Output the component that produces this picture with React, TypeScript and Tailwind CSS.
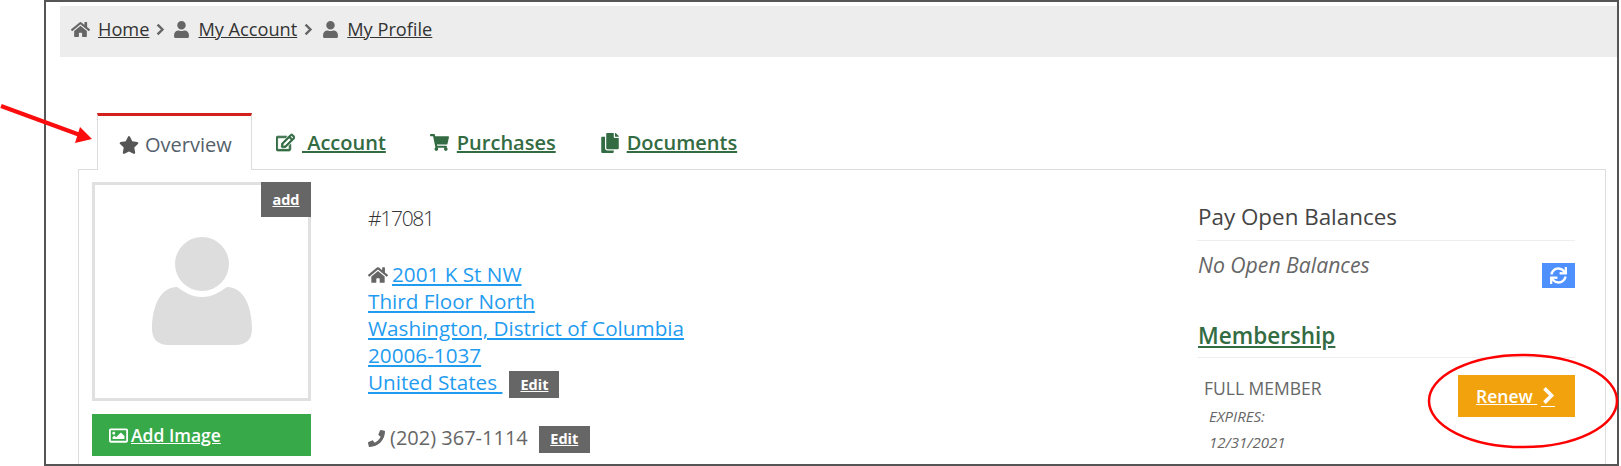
import { FaHome, FaUser, FaStar, FaRegEdit, FaShoppingCart, FaCopy, FaPhone, FaRegImage, FaSync } from 'react-icons/fa';

const font = "font-['Open_Sans','Liberation_Sans',sans-serif]";

function Chevron({ className }: { className: string }) {
  return (
    <svg viewBox="0 0 10 16" className={className} aria-hidden="true">
      <path d="M2 2 L8 8 L2 14" fill="none" stroke="currentColor" strokeWidth="3" />
    </svg>
  );
}

function Crumb({ icon, label, iconWidth }: { icon: React.ReactNode; label: string; iconWidth: string }) {
  return (
    <span className="flex items-center">
      <span className={`text-[#666] text-[19px] flex justify-start ${iconWidth}`}>{icon}</span>
      <a className="underline text-[#333] text-[18.2px]">{label}</a>
    </span>
  );
}

function Tab({ icon, label, className }: { icon: React.ReactNode; label: string; className: string }) {
  return (
    <a className={`flex items-center pt-[2px] underline font-semibold text-[20px] text-[#336b43] ${className}`}>
      {icon}
      <span>{label}</span>
    </a>
  );
}

function EditButton({ className }: { className: string }) {
  return (
    <span className={`inline-flex items-center justify-center bg-[#666] text-white font-bold underline text-[14.5px] h-[27px] ${className}`}>
      Edit
    </span>
  );
}

export default function App() {
  return (
    <div className={`relative w-[1621px] h-[466px] overflow-hidden bg-white ${font}`}>
      <div className="ml-[44px] w-[1575px] h-[466px] border-2 border-[#555] pt-[4px] pl-[14px] overflow-hidden">
        {/* breadcrumb */}
        <div className="h-[51px] bg-[#ededed] flex items-center pl-[11px] pb-[4px]">
          <Crumb icon={<FaHome />} label="Home" iconWidth="w-[27px]" />
          <Chevron className="w-[10px] h-[13px] text-[#666] ml-[6px] mr-[8px]" />
          <Crumb icon={<FaUser className="text-[17px]" />} label="My Account" iconWidth="w-[25px]" />
          <Chevron className="w-[10px] h-[13px] text-[#666] ml-[6px] mr-[9px]" />
          <Crumb icon={<FaUser className="text-[17px]" />} label="My Profile" iconWidth="w-[25px]" />
        </div>

        {/* tabs */}
        <div className="ml-[18px] w-[1528px] mt-[56px]">
          <div className="flex h-[57px] pl-[19px] relative z-10 -mb-[1px]">
            <div className="w-[155px] h-[57px] bg-white border-x border-[#ddd] border-t-[3px] border-t-[#d2201a] flex items-center pt-[4px] pl-[21px] gap-[6px] text-[#555f6b] text-[20px]">
              <FaStar className="text-[#555] text-[18px] w-[20px]" />
              <span>Overview</span>
            </div>
            <Tab icon={<FaRegEdit className="text-[19px] mr-[7px]" stroke="currentColor" strokeWidth={24} />} label=" Account" className="ml-[24px] whitespace-pre" />
            <Tab icon={<FaShoppingCart className="text-[19px] mr-[8px]" />} label="Purchases" className="ml-[44px]" />
            <Tab icon={<FaCopy className="text-[20px] mr-[7px]" />} label="Documents" className="ml-[44px]" />
          </div>

          {/* panel */}
          <div className="border border-[#ddd] h-[300px] flex pl-[13px] pt-[12px]">
            <div className="w-[219px] shrink-0">
              <div className="relative w-[219px] h-[219px] border-[3px] border-[#e0e0e0] flex items-center justify-center">
                <a className="absolute -top-[3px] -right-[3px] w-[50px] h-[35px] bg-[#666] text-white font-bold underline text-[14.5px] flex items-center justify-center">add</a>
                <svg width="100" height="110" viewBox="0 0 100 110" aria-hidden="true">
                  <circle cx="50" cy="27" r="27" fill="#ddd" />
                  <path d="M25 50 C 32 55 40 60 50 60 C 60 60 68 55 75 50 C 92 50 100 70 100 92 C 100 103 93 108 84 108 L 16 108 C 7 108 0 103 0 92 C 0 70 8 50 25 50 Z" fill="#ddd" />
                </svg>
              </div>
              <a className="mt-[13px] h-[42px] bg-[#37a949] text-white underline font-semibold text-[17.5px] flex items-center pl-[17px] gap-[3px]">
                <FaRegImage className="text-[19px]" />
                <span>Add Image</span>
              </a>
            </div>

            <div className="ml-[57px] flex-1">
              <div className="text-[21px] text-[#333] font-light tracking-[-1.3px] leading-[27px] mt-[23px]">#17081</div>
              <div className="mt-[29px] text-[20.7px] leading-[27px] text-[#1f9cf0]">
                <div className="flex items-center">
                  <FaHome className="text-[#666] text-[20px] mr-[4px]" />
                  <a className="underline">2001 K St NW</a>
                </div>
                <div><a className="underline">Third Floor North</a></div>
                <div><a className="underline">Washington, District of Columbia</a></div>
                <div><a className="underline">20006-1037</a></div>
                <div className="flex items-center">
                  <a className="underline whitespace-pre">United States </a>
                  <EditButton className="ml-[7px] translate-y-[2px] w-[50px]" />
                </div>
              </div>
              <div className="mt-[27px] flex items-center text-[20px] text-[#666]">
                <FaPhone className="text-[17px] text-[#666] mr-[5px]" />
                <span>(202) 367-1114</span>
                <EditButton className="ml-[11px] translate-y-[1px] w-[51px]" />
              </div>
            </div>

            <div className="w-[378px] shrink-0 mr-[30px]">
              <div className="h-[59px] border-b border-[#eee] text-[22.4px] leading-[30px] text-[#444] pt-[21px]">
                <span className="block -mt-[1px] ml-[1px]">Pay Open Balances</span>
              </div>
              <div className="relative h-[85px]">
                <div className="italic text-[#666] text-[21.2px] leading-[24px] pt-[12px] pl-[1px]">No Open Balances</div>
                <span className="absolute right-0 top-[22px] w-[33px] h-[25px] bg-[#4f90ff] text-white flex items-center justify-center text-[17px]">
                  <FaSync />
                </span>
              </div>
              <div className="h-[37px] border-b border-[#eee]">
                <a className="underline text-[#336b43] font-semibold text-[22.5px] leading-[30px] block w-fit -mt-[5px] ml-[1px]">Membership</a>
              </div>
              <div className="flex justify-between">
                <div className="pl-[7px] pt-[18px] text-[#666]">
                  <div className="text-[17.5px] leading-[24px]">FULL MEMBER</div>
                  <div className="italic text-[15px] leading-[26px] pl-[5px] mt-[3px]">EXPIRES:</div>
                  <div className="italic text-[15px] leading-[26px] pl-[5px]">12/31/2021</div>
                </div>
                <a className="mt-[17px] w-[117px] h-[42px] bg-[#f2a20c] text-white font-semibold text-[17.5px] flex items-center pl-[18px] whitespace-pre">
                  <span className="underline">Renew </span>
                  <span className="ml-[4px] pb-[1px] border-b border-white">
                    <Chevron className="w-[14px] h-[19px]" />
                  </span>
                </a>
              </div>
            </div>
          </div>
        </div>
      </div>

      {/* annotations */}
      <svg className="absolute left-0 top-0 pointer-events-none" width="1621" height="466" aria-hidden="true">
        <path d="M1 106 L80 135" stroke="#fb0d0d" strokeWidth="4" fill="none" />
        <path d="M92 139 L75 143 L80 127 Z" fill="#fb0d0d" />
        <ellipse cx="1523" cy="401" rx="94" ry="46" stroke="#f00" strokeWidth="2.5" fill="none" />
      </svg>
    </div>
  );
}
